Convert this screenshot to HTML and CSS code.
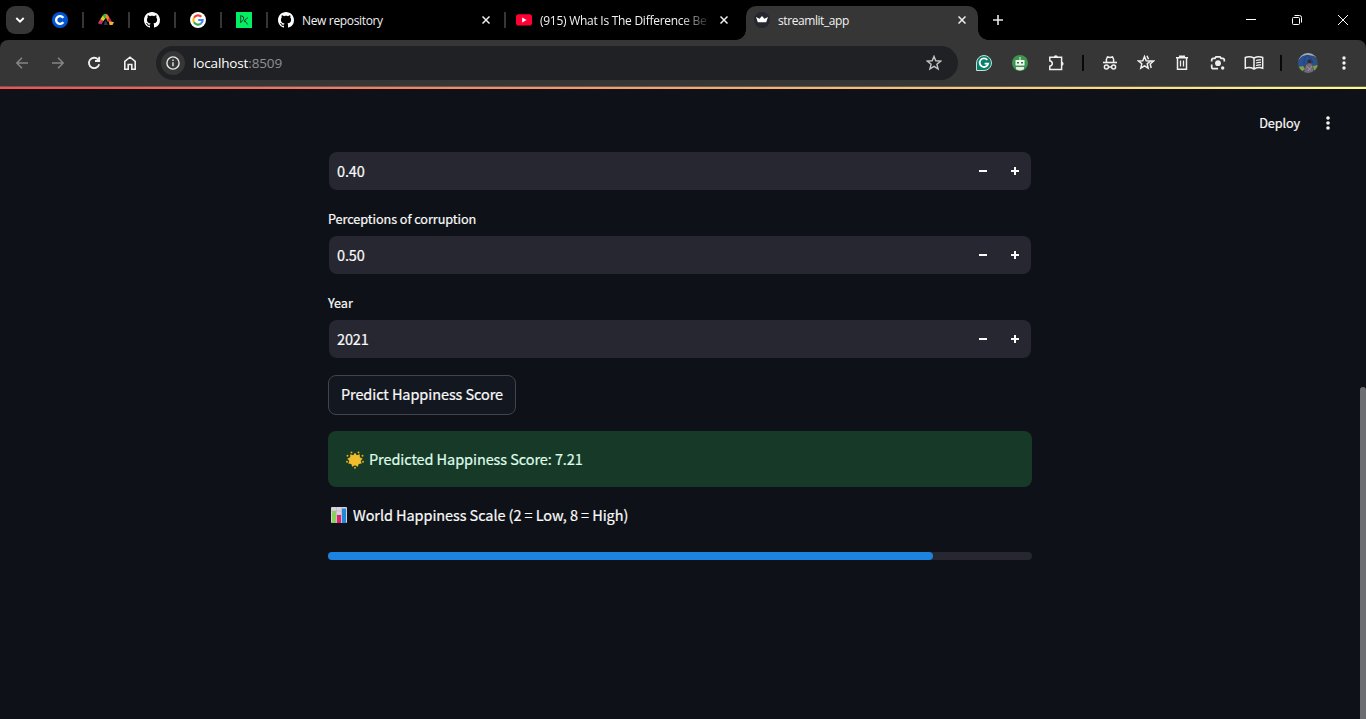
FILE: index.html
```html
<!DOCTYPE html>
<html lang="en">
<head>
<meta charset="utf-8">
<title>streamlit_app</title>
<link rel="stylesheet" href="styles.css">
</head>
<body>
<div class="window">
  <header class="tabstrip">
    <button class="tab-search" aria-label="Search tabs"><svg width="10" height="10" viewBox="0 0 10 10"><path d="M1.3 3l3.7 3.7L8.7 3" fill="none" stroke="#fff" stroke-width="1.9"/></svg></button>
    <div class="pinned"><svg width="16" height="16" viewBox="0 0 16 16"><circle cx="8" cy="8" r="8" fill="#0056d2"/><path d="M11.3 10.1A3.9 3.9 0 1 1 11.3 5.9" fill="none" stroke="#fff" stroke-width="2.4"/></svg></div>
    <div class="pinned"><svg width="16" height="16" viewBox="0 0 16 16"><path d="M0 11.5L3 7l3 1-2.500 4.500z" fill="#b52a8c"/><path d="M0 11.500L2.500 7l2 1.500z" fill="#e8452c"/><path d="M2.500 7L5 3l3 2.500L5.500 9z" fill="#d9d61f"/><path d="M5 3Q7 1 9 2.500L8 6 6 6z" fill="#35b34a"/><path d="M8 2Q9.500 2 10.500 4L12.500 8l-2.500 2L7.500 5z" fill="#f5822a"/><path d="M10 7l2-1 2 4-2 3z" fill="#c01f50"/><path d="M11 9.500l5 .5-1.500 3L11.500 13z" fill="#f2b32a"/><path d="M5.500 13l2-5 2.500 5z" fill="#26384c"/></svg></div>
    <div class="pinned"><svg width="16" height="16" viewBox="0 0 16 16"><path class="gh" d="M8 0C3.580 0 0 3.580 0 8c0 3.540 2.290 6.530 5.470 7.590.4.070.55-.17.55-.38 0-.19-.01-.82-.01-1.490-2.010.37-2.530-.49-2.690-.94-.09-.23-.48-.94-.82-1.130-.28-.15-.68-.52-.01-.53.63-.01 1.080.58 1.230.82.72 1.210 1.870.87 2.330.66.070-.52.28-.87.51-1.070-1.780-.2-3.640-.89-3.640-3.950 0-.87.31-1.590.82-2.150-.08-.2-.36-1.020.08-2.120 0 0 .67-.21 2.200.82.64-.18 1.320-.27 2-.27s1.360.09 2 .27c1.530-1.040 2.200-.82 2.200-.82.44 1.100.16 1.920.08 2.120.51.56.82 1.270.82 2.150 0 3.070-1.870 3.750-3.650 3.950.29.25.54.73.54 1.480 0 1.070-.01 1.930-.01 2.200 0 .21.15.46.55.38A8.010 8.010 0 0 0 16 8c0-4.420-3.580-8-8-8z"/></svg></div>
    <div class="pinned"><svg width="16" height="16" viewBox="0 0 16 16"><circle cx="8" cy="8" r="8" fill="#fff"/><g fill="none" stroke-width="2.200"><path d="M4 5.700A4.600 4.600 0 0 1 11.300 4.800" stroke="#ea4335"/><path d="M4 10.300A4.600 4.600 0 0 1 4 5.700" stroke="#fbbc05"/><path d="M11 11.500A4.600 4.600 0 0 1 4 10.300" stroke="#34a853"/><path d="M8.200 8H12.600A4.600 4.600 0 0 1 11 11.500" stroke="#4285f4"/></g></svg></div>
    <div class="pinned"><svg width="16" height="16" viewBox="0 0 16 16"><path d="M0 0h16v16H0z" fill="#03ef62"/><path d="M4.700 11V3.500L7.600 5Q9 7.500 4.700 10.500M12 5.500L8.600 8.300V10M8.600 8.300L11.700 12.500" fill="none" stroke="#05412f" stroke-width="1"/></svg></div>
    <div class="tab tab-sep">
      <svg width="16" height="16" viewBox="0 0 16 16"><path class="gh" d="M8 0C3.580 0 0 3.580 0 8c0 3.540 2.290 6.530 5.470 7.590.4.070.55-.17.55-.38 0-.19-.01-.82-.01-1.490-2.010.37-2.530-.49-2.690-.94-.09-.23-.48-.94-.82-1.130-.28-.15-.68-.52-.01-.53.63-.01 1.080.58 1.230.82.72 1.210 1.870.87 2.330.66.070-.52.28-.87.51-1.070-1.780-.2-3.640-.89-3.640-3.950 0-.87.31-1.590.82-2.150-.08-.2-.36-1.020.08-2.120 0 0 .67-.21 2.200.82.64-.18 1.320-.27 2-.27s1.360.09 2 .27c1.530-1.040 2.200-.82 2.200-.82.44 1.100.16 1.920.08 2.120.51.56.82 1.270.82 2.150 0 3.070-1.870 3.750-3.650 3.950.29.25.54.73.54 1.480 0 1.070-.01 1.930-.01 2.200 0 .21.15.46.55.38A8.010 8.010 0 0 0 16 8c0-4.420-3.580-8-8-8z"/></svg>
      <span class="tab-title t-repo">New repository</span>
      <svg class="close" width="8" height="8" viewBox="0 0 8 8"><path d="M.5.5l7 7M7.500.5l-7 7"/></svg>
    </div>
    <div class="tab tab-video">
      <svg width="16" height="16" viewBox="0 0 16 16"><rect y="2.300" width="16" height="11.200" rx="2.600" fill="#ff0033"/><path d="M6.200 5.600l4.400 2.400-4.400 2.400z" fill="#fff"/></svg>
      <span class="tab-title fade">(915) What Is The Difference Be</span>
      <svg class="close" width="8" height="8" viewBox="0 0 8 8"><path d="M.5.5l7 7M7.500.5l-7 7"/></svg>
    </div>
    <div class="tab active">
      <svg width="16" height="16" viewBox="0 0 16 16"><circle cx="8" cy="8" r="8" fill="#262730"/><path d="M2 5l3.500 1.700L8 4l2.500 2.700L14 5l-1.800 5.200H3.800z" fill="#fff"/></svg>
      <span class="tab-title t-app">streamlit_app</span>
      <svg class="close" width="8" height="8" viewBox="0 0 8 8"><path d="M.5.5l7 7M7.500.5l-7 7"/></svg>
    </div>
    <button class="new-tab" aria-label="New tab"><svg width="10" height="10" viewBox="0 0 10 10"><path d="M5 0v10M0 5h10" stroke="#e8e8e8" stroke-width="1.600"/></svg></button>
    <div class="controls">
      <span><svg width="10" height="10" viewBox="0 0 10 10"><path d="M0 4.500h10"/></svg></span>
      <span><svg width="10" height="10" viewBox="0 0 10 10"><rect x=".5" y="2.500" width="7" height="7" rx="1"/><path d="M2.500.5H7.500Q9.500.5 9.500 2.500V7.500"/></svg></span>
      <span><svg width="10" height="10" viewBox="0 0 10 10"><path d="M0 0l10 10M10 0L0 10"/></svg></span>
    </div>
  </header>

  <nav class="toolbar">
    <span class="tool dim"><svg width="14" height="12" viewBox="0 0 14 12"><path d="M13 6H2M7 .8L1.800 6 7 11.200"/></svg></span>
    <span class="tool dim"><svg width="14" height="12" viewBox="0 0 14 12"><path d="M1 6h11M7 .8L12.200 6 7 11.200"/></svg></span>
    <span class="tool"><svg width="14" height="14" viewBox="0 0 14 14"><path d="M12.200 8.300A5.200 5.200 0 1 1 11 3.400L12 4.600M12.200.8V5H8" stroke-width="1.800"/></svg></span>
    <span class="tool"><svg width="14" height="14" viewBox="0 0 14 14"><path d="M1.800 13.200V5.300L7 1.200l5.200 4.100v7.900H8.800V8.500H5.200v4.700z" stroke-width="1.600"/></svg></span>
    <div class="omnibox">
      <span class="info"><svg width="14" height="14" viewBox="0 0 14 14"><circle cx="7" cy="7" r="6.100"/><path d="M7 6.200v4M7 3.600v1.500"/></svg></span>
      <span class="url">localhost<span class="port">:8509</span></span>
      <svg class="star" width="16" height="16" viewBox="0 0 16 16"><path d="M8 1.400l1.800 4.400 4.900.3-3.800 3.100 1.200 4.700L8 11.400l-4.100 2.500 1.200-4.700L1.300 6.100l4.900-.3z"/></svg>
    </div>
    <span class="tool"><svg width="18" height="18" viewBox="0 0 18 18"><path d="M9 1.500A7.500 7.500 0 1 1 9 16.500H1.500V9A7.500 7.500 0 0 1 9 1.500z" fill="#087f69" stroke="#c7ddd8" stroke-width="1"/><path d="M12.300 5.900A4.300 4.300 0 1 0 13.200 9.600H9.600" stroke="#fff" stroke-width="1.800"/></svg></span>
    <span class="tool"><svg width="16" height="16" viewBox="0 0 16 16"><circle cx="8" cy="8" r="8" fill="#3d9650" stroke="none"/><path d="M7.500 2h1v3h4v5.500h-9V5h4z" fill="#f3f8ef" stroke="none"/><path d="M4 12h8v2.300Q8 16.500 4 14.300z" fill="#e3efdf" stroke="none"/><path d="M5 7h2v1.500H5zM9 7h2v1.500H9z" fill="#2f7d40" stroke="none"/></svg></span>
    <span class="tool"><svg width="18" height="18" viewBox="0 0 18 18"><path d="M2.800 3.200H14.600V15.600H2.800V12.200Q5.300 11.600 5.300 9.500T2.800 6.800z"/><path d="M6.800 3.200a2 2 0 0 1 4 0zM14.600 7.700a2 2 0 0 1 0 4z" fill="#eee" stroke="none"/></svg></span>
    <span class="divider"></span>
    <span class="tool"><svg width="16" height="16" viewBox="0 0 16 16"><path d="M1 7.500h14" stroke-width="1.600"/><path d="M4.400 7V4.300L5.500 1.900 8 2.500l2.500-.6 1.100 2.400V7"/><circle cx="4.400" cy="12" r="2"/><circle cx="11.600" cy="12" r="2"/><path d="M6.400 12h3.200"/></svg></span>
    <span class="tool"><svg width="18" height="18" viewBox="0 0 18 18"><path d="M7.500 2.500l1.700 4.200 4.300.3-3.300 2.800 1 4.400-3.700-2.400-3.700 2.400 1-4.400L1.500 7l4.300-.3zM10 1.800l1.500 3.500M13.500 7h3l-3.300 3 1 4"/></svg></span>
    <span class="tool"><svg width="14" height="16" viewBox="0 0 14 16"><path d="M1 2.700h12M4.700 2V1.300h4.600V2M2.500 3v11.200h9V3"/><path d="M5.500 5.500v6M8.500 5.500v6" stroke-width="1.300"/></svg></span>
    <span class="tool"><svg width="16" height="16" viewBox="0 0 16 16"><path d="M1.700 6.500V5Q1.700 3.300 3.400 3.300H5L6 1.800h4l1 1.500h1.600Q14.300 3.300 14.300 5V6.500M1.700 9.500v2.500Q1.700 13.700 3.400 13.700H8" stroke-width="1.700"/><circle cx="8" cy="8.200" r="2.900" fill="#eee" stroke="none"/><circle cx="12.700" cy="13" r="1.700" fill="#eee" stroke="none"/></svg></span>
    <span class="tool"><svg width="20" height="16" viewBox="0 0 20 16"><path d="M10 3Q5.500.7 1.300 2.500v10.700Q5.500 11.700 10 14q4.500-2.300 8.700-.8V2.500Q14.500.7 10 3zM10 3v10.500"/><path d="M12 5.500q2.500-1 5-.6M12 8q2.500-1 5-.6M12 10.500q2.500-1 5-.6" stroke-width="1.200"/></svg></span>
    <span class="divider"></span>
    <span class="tool"><svg class="avatar" width="20" height="20" viewBox="0 0 20 20"><g stroke="none"><path d="M0 0h20v20H0z" fill="#414a58"/><path d="M0 0h20v6l-4-3-6-1-6 2-4 4z" fill="#a3abb3"/><path d="M0 13V8Q3 2 9 2t10 6l-1 5-5-3-6 1-4 3z" fill="#29508f"/><path d="M0 14l5-1 2 3-4 3H0zM15 13l5-1v4l-4 2z" fill="#7da04f"/><circle cx="11.500" cy="8.500" r="2" fill="#3b2528"/><path d="M8 12l3.500-2 3 2 1 8H6z" fill="#6b6a80"/></g><path d="M9 2Q5 6 6 11M9 2q5 2 6 8" stroke="#1e3e75" stroke-width=".7"/><path d="M8.500 13l4 4M14 13l-4 5" stroke="#bd8c7a" stroke-width="1"/></svg></span>
    <span class="tool"><svg width="4" height="16" viewBox="0 0 4 16"><g fill="#f2f2f2" stroke="none"><circle cx="2" cy="3" r="1.700"/><circle cx="2" cy="8" r="1.700"/><circle cx="2" cy="13" r="1.700"/></g></svg></span>
  </nav>

  <main class="app">
    <div class="decoration"></div>
    <div class="app-header">
      <span class="deploy">Deploy</span>
      <svg width="4" height="16" viewBox="0 0 4 16"><g fill="#fafafa"><circle cx="2" cy="3" r="1.800"/><circle cx="2" cy="8" r="1.800"/><circle cx="2" cy="13" r="1.800"/></g></svg>
    </div>
    <section class="form">
      <div class="number"><span class="value">0.40</span><span class="step minus"></span><span class="step plus"></span></div>
      <label class="label"><span>Perceptions of corruption</span></label>
      <div class="number"><span class="value">0.50</span><span class="step minus"></span><span class="step plus"></span></div>
      <label class="label"><span>Year</span></label>
      <div class="number"><span class="value">2021</span><span class="step minus"></span><span class="step plus"></span></div>
      <button class="predict">Predict Happiness Score</button>
      <div class="alert">
        <svg width="18" height="18" viewBox="0 0 18 18"><path d="M9 1.800l1.900 2.400 2.900-.9v3l2.900 1.500-2 2 1 2.800-3 .3-.9 2.800L9 14.300l-2.800 1.400-.9-2.800-3-.3 1-2.800-2-2 2.900-1.500v-3l2.900.9z" fill="#f1bd2b"/><g fill="#e0ac22"><circle cx="5.500" cy="1.500" r="1"/><circle cx="12.500" cy="1.500" r="1"/><circle cx="1.500" cy="4.800" r="1"/><circle cx="16.500" cy="4.800" r="1"/><circle cx="1" cy="10.700" r="1"/><circle cx="17" cy="10.700" r="1"/><circle cx="9" cy="16.800" r="1"/></g></svg>
        <span class="line">Predicted Happiness Score: 7.21</span>
      </div>
      <p class="scale">
        <svg width="16" height="16" viewBox="0 0 16 16"><rect width="16" height="16" rx="1" fill="#d8d3de"/><path d="M0 4h16M0 8h16M5.500 0v16M10.500 0v16" stroke="#b9b1c3" stroke-width=".6"/><path d="M1 4h4v12H1z" fill="#86d35b"/><path d="M6 8h4v8H6z" fill="#e3206d"/><path d="M11 1.500h4V16h-4z" fill="#2187d9"/></svg>
        <span class="line">World Happiness Scale (2 = Low, 8 = High)</span>
      </p>
      <div class="progress"><div class="bar" style="width:86%"></div></div>
    </section>
    <div class="scrollbar"></div>
  </main>
</div>
</body>
</html>
```

FILE: styles.css
```css
* { box-sizing: border-box; }
body { margin: 0; background: #000; overflow: hidden; }
button { padding: 0; border: 0; background: none; color: inherit; font: inherit; }
svg { display: block; flex: none; }
.window { width: 1366px; height: 719px; display: flex; flex-direction: column; font-family: "Open Sans", "Noto Sans", sans-serif; }

.tabstrip { height: 40px; display: flex; align-items: center; padding-left: 6px; background: #000; flex: none; }
.tab-search { width: 28px; height: 28px; margin-right: 4px; border-radius: 9px; background: #363636; display: flex; align-items: center; justify-content: center; }
.pinned { width: 46px; height: 16px; border-right: 2px solid #363636; display: flex; justify-content: center; }
.gh { fill: #fff; }
.tab { position: relative; width: 240px; height: 16px; padding: 0 16px 0 10px; display: flex; align-items: center; }
.tab-sep { width: 238px; border-right: 2px solid #363636; }
.tab-video { padding-right: 18px; }
.tab-title { margin-left: 8px; margin-right: auto; padding-top: 2px; font-size: 12px; line-height: 18px; letter-spacing: -0.34px; color: #f2f2f2; white-space: nowrap; }
.t-app { letter-spacing: -0.42px; }
.fade { letter-spacing: -0.27px; -webkit-mask-image: linear-gradient(90deg, #000 140px, transparent 172px); mask-image: linear-gradient(90deg, #000 140px, transparent 172px); }
.close { fill: none; stroke: #eee; stroke-width: 1.5; }
.tab-sep .close { margin-right: -2px; }
.active { width: 232px; height: 34px; align-self: flex-end; padding: 0 12px 6px 8px; border-radius: 10px 10px 0 0; background: #363636; }
.active::before, .active::after { content: ""; position: absolute; bottom: 0; width: 10px; height: 10px; }
.active::before { left: -10px; background: radial-gradient(circle at 0 0, transparent 9.500px, #363636 10px); }
.active::after { right: -10px; background: radial-gradient(circle at 100% 0, transparent 9.500px, #363636 10px); }
.new-tab { width: 40px; display: flex; justify-content: center; }
.controls { display: flex; margin-left: auto; }
.controls span { width: 46px; display: flex; justify-content: center; }
.controls svg { fill: none; stroke: #fff; stroke-width: 1; }

.toolbar { height: 47px; padding: 0 4px; display: flex; align-items: center; background: #363636; border-bottom: 1px solid #5c5c5e; border-radius: 8px 8px 0 0; flex: none; }
.tool { width: 36px; height: 36px; display: flex; align-items: center; justify-content: center; }
.tool svg { fill: none; stroke: #f0f0f0; stroke-width: 1.500; }
.dim svg { stroke: #858585; }
.omnibox { width: 802px; height: 34px; margin: 0 8px; padding: 0 16px 0 5px; border-radius: 17px; background: #202124; display: flex; align-items: center; }
.info { width: 24px; height: 24px; border-radius: 50%; background: #363636; display: flex; align-items: center; justify-content: center; }
.info svg { fill: none; stroke: #e8e8e8; stroke-width: 1.400; }
.url { margin-left: 8px; font-size: 13.500px; line-height: 20px; letter-spacing: -0.14px; color: #fff; }
.port { color: #8f9093; }
.star { margin-left: auto; fill: none; stroke: #c4c4c4; stroke-width: 1.400; }
.divider { width: 2px; height: 16px; margin: 0 8px; background: #080808; }
.avatar { border-radius: 50%; }

.app { position: relative; flex: 1; background: #0e1117; color: #fafafa; font-family: "Noto Sans CJK SC", "Noto Sans", sans-serif; -webkit-text-stroke: 0.2px; }
.decoration { height: 2px; background: linear-gradient(90deg, #ff4b4b, #fffd80); }
.app-header { height: 62px; padding: 5px 36px 0 0; display: flex; align-items: center; justify-content: flex-end; gap: 26px; }
.deploy { font-size: 12.700px; line-height: 20px; letter-spacing: -0.12px; }
.form { width: 704px; margin-left: 328px; font-size: 14.500px; letter-spacing: -0.08px; }
.number { height: 38px; margin: 1px 1px 0; padding: 0 0 0 8px; border-radius: 8px; background: #262730; display: flex; align-items: center; }
.value { margin-right: auto; line-height: 24px; padding-bottom: 1px; letter-spacing: -0.15px; }
.step { width: 32px; height: 8px; background: linear-gradient(#fafafa, #fafafa) 50% 50% / 8px 2px no-repeat; }
.plus { background: linear-gradient(#fafafa, #fafafa) 50% 50% / 8px 2px no-repeat, linear-gradient(#fafafa, #fafafa) 50% 50% / 2px 8px no-repeat; }
.label { height: 45px; padding-top: 19px; display: flex; font-size: 12.700px; line-height: 20px; }
.predict { display: flex; align-items: center; justify-content: center; width: 188px; height: 40px; margin-top: 17px; padding-bottom: 3px; border: 1px solid #41444c; border-radius: 8px; background: #131720; white-space: nowrap; letter-spacing: -0.08px; }
.alert { height: 56px; margin-top: 16px; padding: 1px 18px 0; border-radius: 8px; background: #173928; color: #dffde9; display: flex; align-items: center; gap: 5px; }
.line { padding-bottom: 2px; }
.scale { height: 26px; margin: 15px 0 0; padding-left: 3px; display: flex; align-items: center; gap: 6px; }
.progress { height: 8px; margin-top: 24px; border-radius: 4px; background: #262730; }
.bar { height: 8px; border-radius: 4px; background: #1c83e1; }
.scrollbar { position: absolute; right: 0; top: 300px; bottom: 0; width: 6px; border-radius: 3px 3px 0 0; background: #6c6d70; }
```
